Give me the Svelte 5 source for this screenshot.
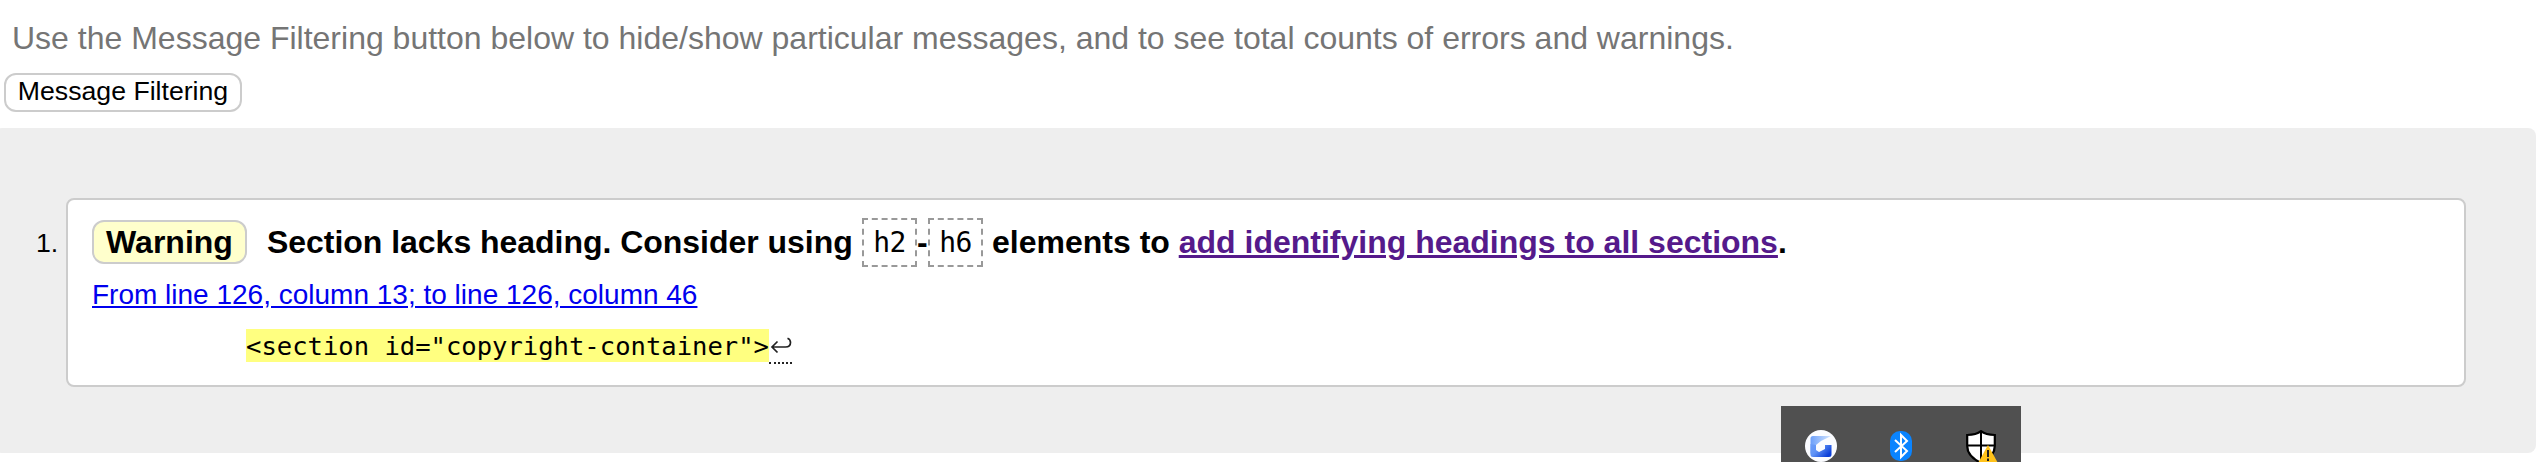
<script>
  const heading = {
    before: 'Section lacks heading. Consider using',
    after: 'elements to',
    link: 'add identifying headings to all sections'
  };
  const extract = '<section id="copyright-container">';
</script>

<div class="page">
  <p class="intro">Use the Message Filtering button below to hide/show particular messages, and to see total counts of errors and warnings.</p>
  <button class="filter">Message Filtering</button>

  <div class="results">
    <span class="number">1.</span>
    <div class="card">
      <p class="message">
        <strong class="badge">Warning</strong><span class="before">{heading.before}</span><code>h2</code><span class="dash">-</span><code>h6</code><span class="after">{heading.after} <a class="visited" href="#sections">{heading.link}</a>.</span>
      </p>
      <p class="location"><a href="#l126c13">From line 126, column 13; to line 126, column 46</a></p>
      <p class="extract"><mark>{extract}</mark><span class="lf" title="Line break">
        <svg width="23" height="32" viewBox="0 0 23 32" fill="none" stroke="#222" stroke-width="1.7"><path d="M8.500 12.500L3 18l5.500 5.500M3 18h13.500c3.800 0 5-2 5-4.500 0-2-1-3.500-3-4.300" /></svg>
      </span></p>
    </div>
  </div>

  <div class="tray">
    <svg class="app" width="32" height="32" viewBox="0 0 32 32">
      <defs>
        <linearGradient id="blue" x1="0" y1="0" x2="1" y2="0.6">
          <stop offset="0" stop-color="#6d9ef8" />
          <stop offset=".45" stop-color="#5f92f6" />
          <stop offset="1" stop-color="#0c3fd8" />
        </linearGradient>
        <linearGradient id="pale" x1="0" y1="0" x2="1" y2="0">
          <stop offset="0" stop-color="#6c9ff9" />
          <stop offset="1" stop-color="#d3e5ff" />
        </linearGradient>
      </defs>
      <circle cx="16" cy="16" r="16" fill="#fbfcff" />
      <path d="M8 6h18l-10 5-5 4-5.500 9V8.500Q5.500 6 8 6z" fill="url(#pale)" />
      <path d="M5.500 14l5.500 1v5l3 2 6-3v-4h6.500v9.500q0 2.500-2.500 2.500H8q-2.500 0-2.500-2.500z" fill="url(#blue)" />
    </svg>
    <svg class="bluetooth" width="22" height="30" viewBox="0 0 22 30">
      <rect width="22" height="30" rx="10" fill="#0a84ff" />
      <path d="M5 9l12 11-6 6V4l6 6L5 21" fill="none" stroke="#fff" stroke-width="2" />
    </svg>
    <svg class="shield" width="32" height="36" viewBox="0 0 32 36">
      <path d="M15 1.200C11.500 4 7 5 1.200 5v11c0 8 5.800 13 13.800 17 8-4 13.800-9 13.800-17V5C23 5 18.500 4 15 1.200z" fill="#fff" stroke="#000" stroke-width="2.200" />
      <path d="M15 1v32M1 15.500h28" stroke="#000" stroke-width="2" />
      <path d="M22 15L33 35H11z" fill="#ffc21a" />
      <path d="M22 20v7M22 28.500v2.500" stroke="#222" stroke-width="2" />
    </svg>
  </div>
</div>

<style>
  :global(body) { background: #fff; overflow: hidden; }
  .page {
    position: relative;
    box-sizing: border-box;
    width: 2543px;
    height: 462px;
    padding-top: 20px;
    overflow: hidden;
    color: #000;
    font: 26.667px/30px "Liberation Sans", Arial, sans-serif;
  }
  p { margin: 0; white-space: nowrap; }
  .intro { margin-left: 12px; font-size: 32px; line-height: 36px; color: #757575; }
  .filter {
    display: block;
    box-sizing: border-box;
    width: 238px;
    height: 39px;
    margin: 17px 0 0 4px;
    padding: 0 0 2px;
    border: 2px solid #ccc;
    border-radius: 12px;
    background: #fff;
    color: #000;
    font: inherit;
    line-height: 33px;
    white-space: nowrap;
  }
  .results {
    box-sizing: border-box;
    display: flex;
    width: 2542px;
    height: 325px;
    margin: 16px 0 0 -6px;
    padding: 70px 70px 66px 42px;
    border-radius: 8px;
    background: #eee;
  }
  .number { width: 30px; padding-top: 30px; flex: none; }
  .card {
    box-sizing: border-box;
    flex: 1;
    height: 189px;
    padding: 18px 24px;
    border: 2px solid #ccc;
    border-radius: 8px;
    background: #fff;
  }
  .message { display: flex; align-items: center; height: 49px; font-size: 32px; line-height: 36px; font-weight: bold; }
  .badge {
    box-sizing: border-box;
    width: 155px;
    height: 44px;
    margin: -1px 20px 0 0;
    border: 2px solid #ccc;
    border-radius: 12px;
    background: #ffc;
    line-height: 40px;
    text-align: center;
  }
  .before { width: 595px; letter-spacing: -0.03px; }
  .before, .dash, .after { padding-bottom: 2px; }
  code {
    box-sizing: border-box;
    width: 55px;
    height: 49px;
    border: 2px dashed #999;
    font: 28px/46px "DejaVu Sans Mono", monospace;
    letter-spacing: -0.5px;
    text-align: center;
  }
  .dash { width: 11px; }
  .after { margin-left: 9px; }
  a { color: #00e; text-decoration: underline; }
  .visited { color: #551a8b; }
  .location { margin-top: 13px; font-size: 28px; }
  .extract { display: flex; margin: 19px 0 0 154px; font: 25.550px/35px "DejaVu Sans Mono", monospace; }
  mark { height: 33px; background: #ffff80; color: #000; }
  .lf { box-sizing: border-box; width: 23px; height: 35px; border-bottom: 2px dotted #222; }
  .lf svg { display: block; }
  .tray {
    position: absolute;
    left: 1781px;
    top: 406px;
    box-sizing: border-box;
    display: flex;
    align-items: flex-start;
    width: 240px;
    height: 60px;
    padding: 24px 0 0 24px;
    background: #505050;
  }
  .bluetooth { margin: 1px 0 0 53px; }
  .shield { margin-left: 54px; }
</style>
